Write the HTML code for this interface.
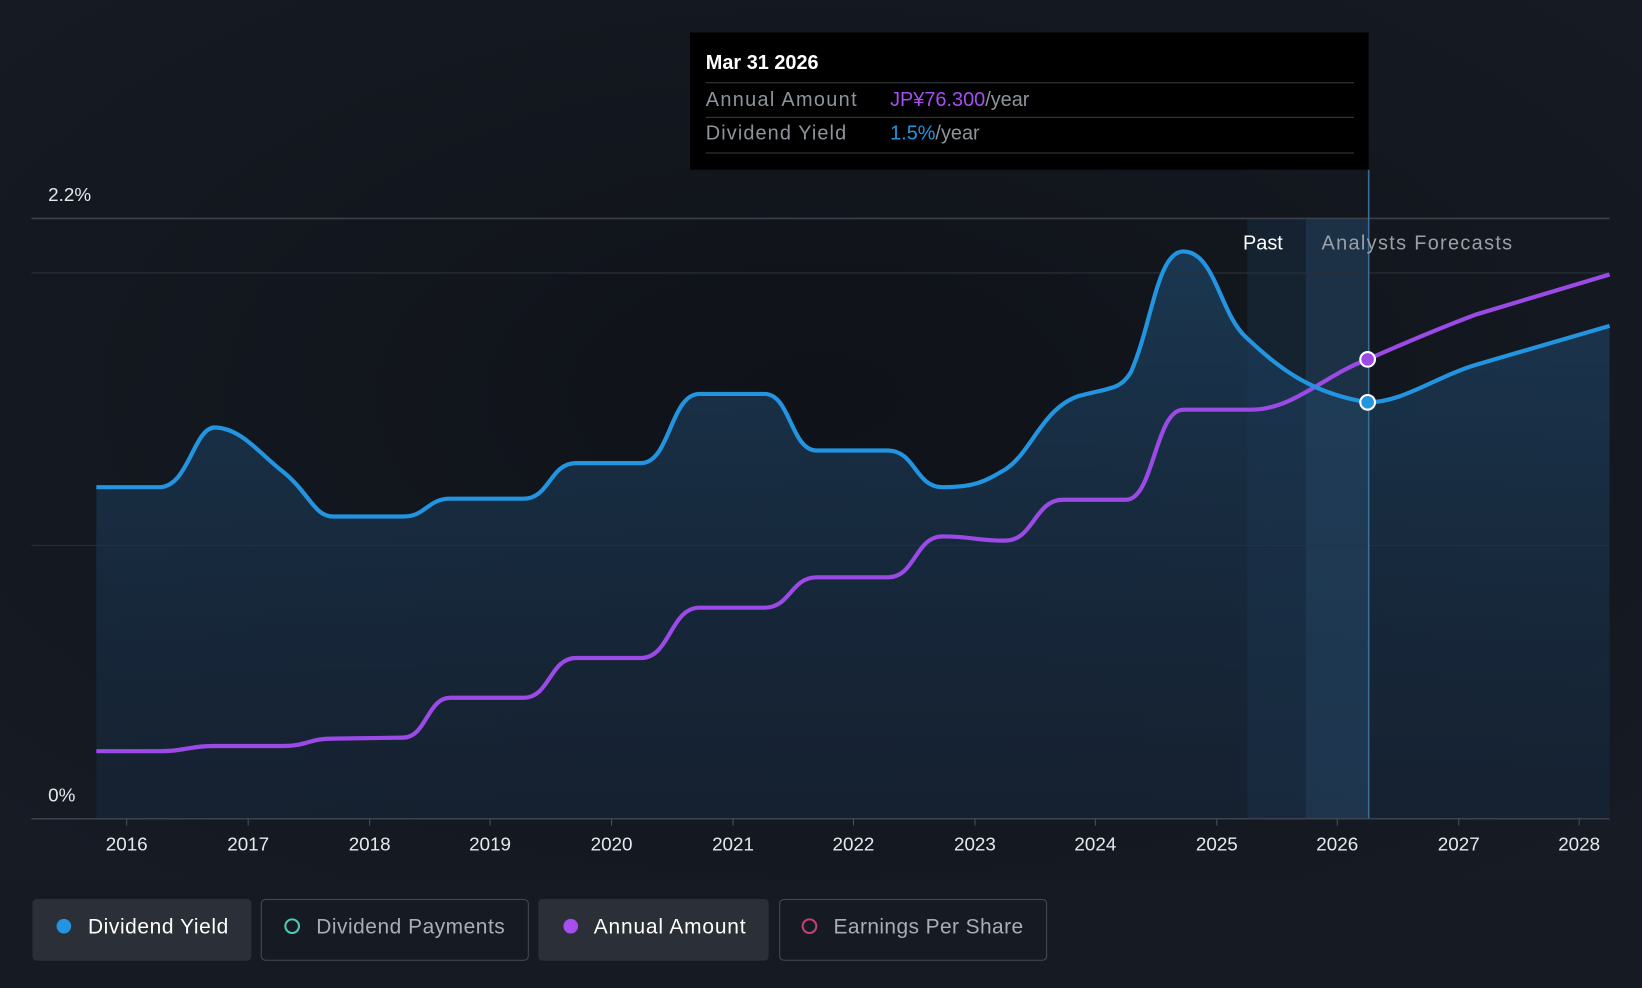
<!DOCTYPE html>
<html><head><meta charset="utf-8"><style>
html,body{margin:0;padding:0;background:#151a23;width:1642px;height:988px;overflow:hidden}
svg{display:block}
text{font-family:"Liberation Sans",sans-serif}
</style></head><body>
<svg width="1642" height="988" viewBox="0 0 1568 943" preserveAspectRatio="none">
<defs>
<radialGradient id="bg" cx="0.5" cy="0.45" r="0.7">
<stop offset="0" stop-color="#0f1218"/><stop offset="1" stop-color="#161b24"/>
</radialGradient>
<linearGradient id="ar" x1="0" y1="0" x2="0" y2="1">
<stop offset="0" stop-color="#1c3d5a" stop-opacity="0.85"/><stop offset="1" stop-color="#16263a" stop-opacity="0.6"/>
</linearGradient>
</defs>
<rect width="1568" height="943" fill="#151a23"/>
<rect x="0" y="0" width="1568" height="840" fill="url(#bg)"/>
<path d="M92,465 L152,465 C180,465 185,408 205,408 C230,408 250,435 270,450 C295,470 300,493 318,493 L385,493 C407,493 408,476 430,476 L500,476 C525,476 525,442 550,442 L612,442 C640,442 640,376 668,376 L730,376 C755,376 755,430 780,430 L848,430 C874,430 874,465 900,465 C930,465 940,460 960,448 C985,432 995,390 1030,378 C1060,370 1070,372 1080,355 C1100,310 1105,240 1130,240 C1160,240 1165,300 1190,322 C1220,350 1250,375 1306,384 C1340,384 1370,360 1410,348 L1537,311 L1537,781 L92,781 Z" fill="url(#ar)"/>
<rect x="1191" y="208" width="116" height="573" fill="#1d3a55" opacity="0.35"/>
<rect x="1247" y="208" width="60" height="573" fill="#2a4d6d" opacity="0.35"/>
<line x1="30" y1="208.5" x2="1537" y2="208.5" stroke="#3b414b" stroke-width="1.5"/>
<line x1="30" y1="260.5" x2="1537" y2="260.5" stroke="#2a303a"/>
<line x1="30" y1="520.5" x2="1537" y2="520.5" stroke="#2a303a"/>
<line x1="30" y1="781.5" x2="1537" y2="781.5" stroke="#4a505a"/>
<line x1="1307" y1="162" x2="1307" y2="781" stroke="#3a6e95" stroke-width="1.5"/>
<g stroke="#4a505a"><line x1="121" y1="781" x2="121" y2="788"/><line x1="237" y1="781" x2="237" y2="788"/><line x1="353" y1="781" x2="353" y2="788"/><line x1="468" y1="781" x2="468" y2="788"/><line x1="584" y1="781" x2="584" y2="788"/><line x1="700" y1="781" x2="700" y2="788"/><line x1="815" y1="781" x2="815" y2="788"/><line x1="931" y1="781" x2="931" y2="788"/><line x1="1046" y1="781" x2="1046" y2="788"/><line x1="1162" y1="781" x2="1162" y2="788"/><line x1="1277" y1="781" x2="1277" y2="788"/><line x1="1393" y1="781" x2="1393" y2="788"/><line x1="1508" y1="781" x2="1508" y2="788"/></g>
<path d="M92,717 L152,717 C178,717 179,712 205,712 L270,712 C294,712 294,705 318,705 L385,704 C407,704 408,666 430,666 L500,666 C525,666 525,628 550,628 L612,628 C640,628 640,580 668,580 L730,580 C755,580 755,551 780,551 L848,551 C874,551 874,512 900,512 C930,512 930,516 960,516 C987,516 988,477 1015,477 L1075,477 C1102,477 1103,391 1130,391 L1195,391 C1235,391 1265,358 1306,343 C1340,328 1375,313 1410,300 L1537,262" fill="none" stroke="#9b4ae6" stroke-width="4"/>
<path d="M92,465 L152,465 C180,465 185,408 205,408 C230,408 250,435 270,450 C295,470 300,493 318,493 L385,493 C407,493 408,476 430,476 L500,476 C525,476 525,442 550,442 L612,442 C640,442 640,376 668,376 L730,376 C755,376 755,430 780,430 L848,430 C874,430 874,465 900,465 C930,465 940,460 960,448 C985,432 995,390 1030,378 C1060,370 1070,372 1080,355 C1100,310 1105,240 1130,240 C1160,240 1165,300 1190,322 C1220,350 1250,375 1306,384 C1340,384 1370,360 1410,348 L1537,311" fill="none" stroke="#2394df" stroke-width="4"/>
<circle cx="1306" cy="343" r="7" fill="#9b4ae6" stroke="#fff" stroke-width="2"/>
<circle cx="1306" cy="384" r="7" fill="#2394df" stroke="#fff" stroke-width="2"/>
<text x="46" y="192" fill="#e6e8eb" font-size="18">2.2%</text>
<text x="46" y="765" fill="#e6e8eb" font-size="18">0%</text>
<text x="1187" y="238" fill="#ffffff" font-size="19">Past</text>
<text x="1262" y="238" fill="#9aa0a8" font-size="19" textLength="182">Analysts Forecasts</text>
<g fill="#e6e8eb" font-size="18" text-anchor="middle"><text x="121" y="812">2016</text><text x="237" y="812">2017</text><text x="353" y="812">2018</text><text x="468" y="812">2019</text><text x="584" y="812">2020</text><text x="700" y="812">2021</text><text x="815" y="812">2022</text><text x="931" y="812">2023</text><text x="1046" y="812">2024</text><text x="1162" y="812">2025</text><text x="1277" y="812">2026</text><text x="1393" y="812">2027</text><text x="1508" y="812">2028</text></g>
<rect x="659" y="31" width="648" height="131" fill="#000"/>
<text x="674" y="66" fill="#fff" font-size="19" font-weight="bold">Mar 31 2026</text>
<line x1="674" y1="79" x2="1293" y2="79" stroke="#3a3d42"/>
<text x="674" y="101" fill="#8e949c" font-size="19" textLength="144">Annual Amount</text>
<text x="850" y="101" font-size="19"><tspan fill="#a64ef0">JP¥76.300</tspan><tspan fill="#8e949c">/year</tspan></text>
<line x1="674" y1="112" x2="1293" y2="112" stroke="#3a3d42"/>
<text x="674" y="133" fill="#8e949c" font-size="19" textLength="134">Dividend Yield</text>
<text x="850" y="133" font-size="19"><tspan fill="#2394df">1.5%</tspan><tspan fill="#8e949c">/year</tspan></text>
<line x1="674" y1="146" x2="1293" y2="146" stroke="#3a3d42"/>
<rect x="31" y="858" width="209" height="59" rx="4" fill="#2b2f38"/>
<circle cx="61" cy="884" r="7" fill="#2394df"/>
<text x="84" y="891" fill="#fff" font-size="20" textLength="134">Dividend Yield</text>
<rect x="249.5" y="858.5" width="255" height="58" rx="4" fill="none" stroke="#454a53"/>
<circle cx="279" cy="884" r="6.5" fill="none" stroke="#4fc8b8" stroke-width="2"/>
<text x="302" y="891" fill="#a9aeb5" font-size="20" textLength="180">Dividend Payments</text>
<rect x="514" y="858" width="220" height="59" rx="4" fill="#2b2f38"/>
<circle cx="545" cy="884" r="7" fill="#a64ef0"/>
<text x="567" y="891" fill="#fff" font-size="20" textLength="145">Annual Amount</text>
<rect x="744.5" y="858.5" width="255" height="58" rx="4" fill="none" stroke="#454a53"/>
<circle cx="773" cy="884" r="6.5" fill="none" stroke="#c2407a" stroke-width="2"/>
<text x="796" y="891" fill="#a9aeb5" font-size="20" textLength="181">Earnings Per Share</text>
</svg>
</body></html>
